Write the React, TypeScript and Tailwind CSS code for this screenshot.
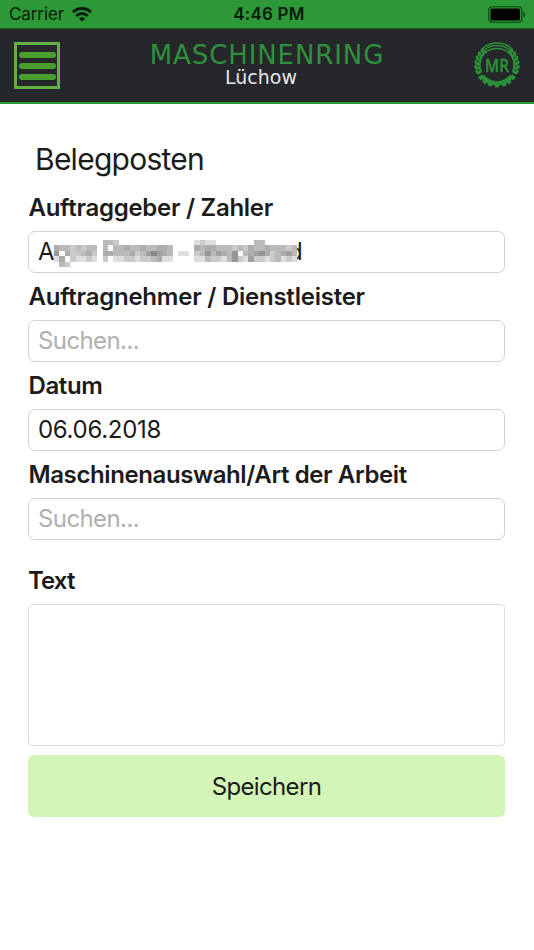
interface FieldProps {
  label: string;
  value?: string;
  labelClass: string;
  children?: React.ReactNode;
}

// One character per block, 7 = darkest, "." = empty
const mosaic = [
  ".........bbc..............dcdd.......bb......",
  "abbcbcbb.b.bbabbabbaab....abaabbbcbcabbabbbcb",
  "8.accbac.aabbbacb979ab.dd.cb8b9ab8.ba98acba9b",
  "da.cddcd.c.ddccdccbadd....ddbccdb8cd9ccdcbdcd",
  ".bc..........................................",
];

const shades: Record<string, string> = {
  "7": "#8a8a8a",
  "8": "#969696",
  "9": "#a0a0a0",
  a: "#acacac",
  b: "#bababa",
  c: "#cacaca",
  d: "#dedede",
};

const Mosaic = () => (
  <svg
    className="absolute left-[25px] top-[8px] h-[27px] w-[243px]"
    viewBox="0 0 45 5"
    preserveAspectRatio="none"
    shapeRendering="crispEdges"
  >
    <rect width="45" height="5" fill="#fff" />
    {mosaic.map((row, y) =>
      row
        .split("")
        .map((cell, x) =>
          cell === "." ? null : (
            <rect key={`${x}-${y}`} x={x} y={y} width="1" height="1" fill={shades[cell]} />
          )
        )
    )}
  </svg>
);

const Wifi = () => (
  <svg className="ml-[8px] h-[15px] w-[20px]" viewBox="0 0 20 15" fill="none" stroke="#071b09">
    <path d="M1 5.3a12.8 12.8 0 0 1 18 0" strokeWidth="3" />
    <path d="M4.2 8.9a8.2 8.2 0 0 1 11.6 0" strokeWidth="2.8" />
    <path d="M10 14.5 6.9 11.6a4.4 4.4 0 0 1 6.2 0z" fill="#071b09" stroke="none" />
  </svg>
);

const Battery = () => (
  <svg className="h-[17px] w-[38px]" viewBox="0 0 38 17">
    <rect x="0.75" y="0.75" width="33" height="15.5" rx="3.5" fill="none" stroke="#0c4314" strokeWidth="1.2" />
    <rect x="2.5" y="2.5" width="29.5" height="12" rx="1.5" fill="#000" />
    <path d="M35.3 5.7c2.4 1 2.4 4.6 0 5.6z" fill="#0c4314" />
  </svg>
);

const Logo = () => {
  const leaves = [-42, -29, -16, -3, 10, 23];
  const teeth = [38, 54, 70, 90, 110, 126, 142];
  return (
    <svg className="h-[46px] w-[46px]" viewBox="-23 -23 46 46">
      <g fill="none" stroke="#2c9038" strokeWidth="1.5">
        <path d="M-14-17a22 22 0 0 1 28 0" />
        <path d="M-13.6-14.4a21 21 0 0 1 27.2 0" />
        <path d="M-13-11.8a20 20 0 0 1 26 0" />
      </g>
      {[1, -1].map((side) => (
        <g key={side} transform={`scale(${side} 1)`} fill="#2c9038">
          {leaves.map((a) => (
            <g key={a} transform={`rotate(${a})`}>
              <ellipse cx="20.7" cy="-1" rx="1.6" ry="2.8" transform="rotate(28 20.7 -1)" />
              <ellipse cx="17.6" cy="-1" rx="1.4" ry="2.6" transform="rotate(-28 17.6 -1)" />
            </g>
          ))}
        </g>
      ))}
      <path d="M-14.8 10.8A18.3 18.3 0 0 0 14.8 10.8" fill="none" stroke="#2c9038" strokeWidth="4.4" />
      {teeth.map((a) => (
        <rect key={a} x="18" y="-2" width="4.5" height="4" fill="#2c9038" transform={`rotate(${a})`} />
      ))}
      <text
        x="0"
        y="7"
        textAnchor="middle"
        textLength="24"
        lengthAdjust="spacingAndGlyphs"
        fill="#2c9038"
        stroke="#2c9038"
        strokeWidth="0.4"
        fontFamily="Open Sans, sans-serif"
        fontWeight="600"
        fontSize="18.5"
      >
        MR
      </text>
    </svg>
  );
};

const Field = ({ label, value, labelClass, children }: FieldProps) => (
  <div className="h-[89px]">
    <label
      className={`block h-[36px] whitespace-nowrap pl-[0.5px] text-[24px] font-semibold leading-[26px] ${labelClass}`}
    >
      {label}
    </label>
    <div className="relative flex h-[42px] items-center rounded-[7px] border border-[#d2d2d2] px-[9px] pb-px text-[24px] tracking-[-0.3px]">
      {children ??
        (value ? (
          <span>{value}</span>
        ) : (
          <span className="tracking-[-0.6px] text-[#b0b0b0]">Suchen...</span>
        ))}
    </div>
  </div>
);

export default function App() {
  return (
    <div className="h-[950px] w-[534px] overflow-hidden bg-white font-['Inter',sans-serif] text-[#1b1b1b]">
      {/* Status bar */}
      <div className="grid h-[28px] grid-cols-3 items-center bg-[#2d9837] pl-[9px] pr-[8px] pt-px text-[#071b09]">
        <div className="flex items-center text-[17px] tracking-[-0.1px]">
          <span className="pt-px">Carrier</span>
          <Wifi />
        </div>
        <span className="pl-[3px] pt-px text-center text-[17px] font-semibold tracking-[0.2px]">4:46 PM</span>
        <div className="flex justify-end">
          <Battery />
        </div>
      </div>

      {/* Header */}
      <header className="flex h-[76px] items-start justify-between border-b-2 border-t border-b-[#2d9837] border-t-[#1f5a2a] bg-[#26272b] pl-[14px] pr-[14px] pt-[13px]">
        <div className="flex h-[47px] w-[46px] flex-col items-center justify-center gap-[5px] border-[3px] border-[#62b044]">
          <div className="h-[6px] w-[37px] rounded-full bg-[#489f2d]"></div>
          <div className="h-[6px] w-[37px] rounded-full bg-[#489f2d]"></div>
          <div className="h-[6px] w-[37px] rounded-full bg-[#489f2d]"></div>
        </div>
        <div className="flex w-[240px] flex-col items-center font-['DejaVu_Sans',sans-serif]">
          <span className="whitespace-nowrap text-[26px] leading-[26px] tracking-[0.9px] text-[#2f8f3c]">
            MASCHINENRING
          </span>
          <span className="-mt-px mr-[12px] text-[19px] leading-[20px] text-[#e6e6e8]">Lüchow</span>
        </div>
        <Logo />
      </header>

      <main className="pl-[28px] pr-[29px] pt-[37px]">
        <h1 className="mb-[18px] pl-[7px] text-[30px] leading-[36px] tracking-[-0.75px]">Belegposten</h1>

        <Field label="Auftraggeber / Zahler" labelClass="tracking-[-0.28px]">
          <span>A</span>
          <span className="absolute left-[259px]">d</span>
          <Mosaic />
        </Field>
        <Field label="Auftragnehmer / Dienstleister" labelClass="tracking-[-0.24px]" />
        <Field label="Datum" value="06.06.2018" labelClass="tracking-[-0.4px]" />
        <Field label="Maschinenauswahl/Art der Arbeit" labelClass="tracking-[-0.4px]" />

        <div className="pt-[17px]">
          <label className="block h-[36px] text-[24px] font-semibold leading-[26px] tracking-[-0.9px]">Text</label>
          <div className="h-[142px] rounded-[4px] border border-[#dedede]"></div>
        </div>
        <button className="mt-[9px] h-[62px] w-full rounded-[6px] bg-[#d3f5b8] pt-[2px] text-[24px] tracking-[-0.65px]">
          Speichern
        </button>
      </main>
    </div>
  );
}
